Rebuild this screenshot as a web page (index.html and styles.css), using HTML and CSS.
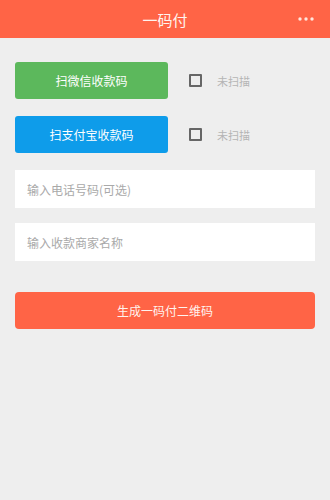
FILE: index.html
```html
<!DOCTYPE html>
<html lang="zh-CN">
<head>
  <meta charset="UTF-8" />
  <meta name="viewport" content="width=device-width, initial-scale=1.0"/>
  <title>一码付</title>
  <link rel="stylesheet" href="styles.css">
</head>
<body>
  <header class="topbar">
    <h1>一码付</h1>
    <svg class="more" width="16" height="4" viewBox="0 0 16 4">
      <circle cx="2" cy="2" r="1.7" fill="#ffe6de"/>
      <circle cx="8" cy="2" r="1.7" fill="#ffe6de"/>
      <circle cx="14" cy="2" r="1.7" fill="#ffe6de"/>
    </svg>
  </header>

  <main class="content">
    <div class="scan-row">
      <button class="scan-btn wechat">扫微信收款码</button>
      <label class="status"><span class="box"></span>未扫描</label>
    </div>
    <div class="scan-row">
      <button class="scan-btn alipay">扫支付宝收款码</button>
      <label class="status"><span class="box"></span>未扫描</label>
    </div>

    <input type="text" class="field" placeholder="输入电话号码(可选)" />
    <input type="text" class="field" placeholder="输入收款商家名称" />

    <button class="generate">生成一码付二维码</button>
  </main>
</body>
</html>
```

FILE: styles.css
```css
body {
  margin: 0;
  background-color: #eeeeee;
  font-family: "Noto Sans CJK SC", "Noto Sans", sans-serif;
  height: 100vh;
}

.topbar {
  height: 38px;
  background-color: #ff6446;
  display: flex;
  align-items: center;
  justify-content: center;
  position: relative;
}

.topbar h1 {
  margin: 0;
  font-size: 15px;
  font-weight: normal;
  color: #fff4ef;
}

.more {
  position: absolute;
  right: 16px;
  top: 17px;
}

.content {
  padding: 24px 15px 0;
  display: flex;
  flex-direction: column;
}

.scan-row {
  display: flex;
  align-items: center;
  margin-bottom: 17px;
}

.scan-btn {
  width: 153px;
  height: 37px;
  border: none;
  border-radius: 3px;
  color: #fff;
  font-family: inherit;
  font-size: 12px;
  padding: 0;
}

.scan-btn.wechat {
  background-color: #5cb85c;
}

.scan-btn.alipay {
  background-color: #0e9cea;
}

.status {
  display: flex;
  align-items: center;
  margin-left: 21px;
  font-size: 11px;
  color: #b5b5b5;
}

.box {
  width: 9px;
  height: 9px;
  border: 2px solid #666;
  border-radius: 1px;
  margin-right: 15px;
}

.field {
  height: 38px;
  border: none;
  background-color: #fff;
  padding: 0 12px;
  font-family: inherit;
  font-size: 12px;
  margin-bottom: 15px;
  box-sizing: border-box;
}

.field::placeholder {
  color: #a9a9a9;
}

.generate {
  margin-top: 16px;
  height: 37px;
  border: none;
  border-radius: 4px;
  background-color: #ff6446;
  color: #fff3ee;
  font-family: inherit;
  font-size: 12px;
}
```
